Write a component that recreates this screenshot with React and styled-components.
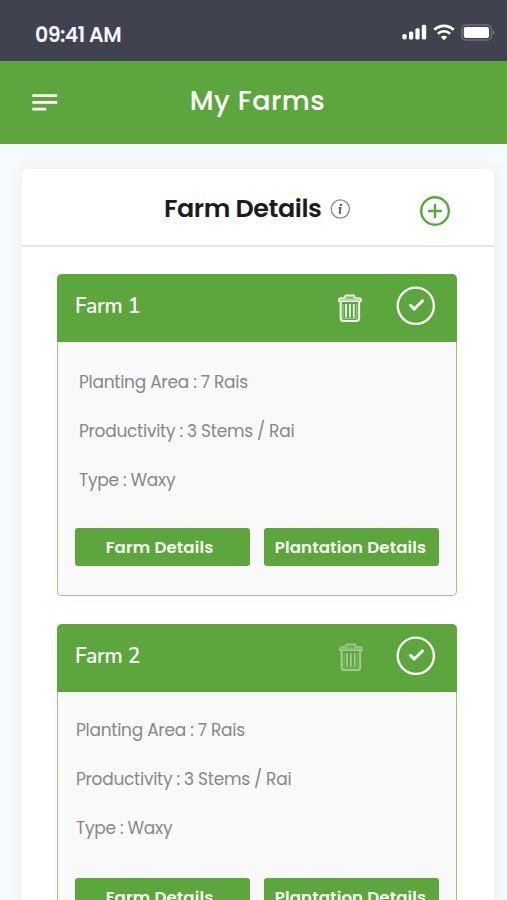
import React from "react";
import styled, { createGlobalStyle } from "styled-components";

const farms = [
  {
    id: 1,
    name: "Farm 1",
    area: "7 Rais",
    productivity: "3 Stems / Rai",
    type: "Waxy",
    canDelete: true,
  },
  {
    id: 2,
    name: "Farm 2",
    area: "7 Rais",
    productivity: "3 Stems / Rai",
    type: "Waxy",
    canDelete: false,
  },
];

const SignalIcon = () => (
  <svg width="25" height="16" viewBox="0 0 25 16" fill="#fff">
    <rect x="0.3" y="10" width="4.4" height="5.6" rx="1.8" />
    <rect x="7" y="7.4" width="4.2" height="8.2" rx="1.6" />
    <rect x="13.4" y="4.2" width="4.2" height="11.4" rx="1.6" />
    <rect x="19.8" y="0.8" width="4.4" height="14.8" rx="1.6" />
  </svg>
);

const WifiIcon = () => (
  <svg width="22" height="17" viewBox="0 0 22 17" fill="none" stroke="#fff">
    <path d="M1.3 5.8C6.8 0.5 15.2 0.5 20.7 5.8" strokeWidth="2.8" />
    <path d="M4.9 9.7C8.4 6.5 13.6 6.5 17.1 9.7" strokeWidth="2.6" />
    <path
      d="M11 16.2L7.8 13C9.6 11.3 12.4 11.3 14.2 13Z"
      fill="#fff"
      stroke="none"
    />
  </svg>
);

const BatteryIcon = () => (
  <svg width="34" height="17" viewBox="0 0 34 17">
    <rect
      x="0.8"
      y="0.9"
      width="29.6"
      height="15.2"
      rx="4.4"
      fill="none"
      stroke="#6c707b"
      strokeWidth="1.5"
    />
    <rect x="2.8" y="3" width="25.2" height="11" rx="2" fill="#fff" />
    <path d="M32 6C34.2 6.8 34.2 10.2 32 11Z" fill="#6c707b" />
  </svg>
);

const MenuIcon = () => (
  <svg width="26" height="18" viewBox="0 0 26 18" fill="#fff">
    <rect x="0.3" y="0.3" width="25" height="2.6" rx="0.6" />
    <rect x="0.3" y="7.1" width="25" height="2.6" rx="0.6" />
    <rect x="0.3" y="13.8" width="14" height="2.6" rx="0.6" />
  </svg>
);

const InfoIcon = () => (
  <svg width="20" height="20" viewBox="0 0 20 20">
    <circle
      cx="10.3"
      cy="10"
      r="9.1"
      fill="none"
      stroke="#88898d"
      strokeWidth="1.3"
    />
    <circle cx="10.9" cy="5.9" r="1.2" fill="#55565a" />
    <path
      d="M8.6 8.9H10.5L9.6 13.8Q9.6 14.5 11 13.8"
      fill="none"
      stroke="#55565a"
      strokeWidth="1.7"
    />
  </svg>
);

const PlusIcon = () => (
  <svg
    width="32"
    height="32"
    viewBox="0 0 32 32"
    fill="none"
    stroke="#5ba63c"
    strokeWidth="2.4"
    strokeLinecap="round"
  >
    <circle cx="16" cy="16" r="13.8" />
    <path d="M16 10V22M10 16H22" />
  </svg>
);

const TrashIcon = () => (
  <svg width="28" height="30" viewBox="0 0 28 30" fill="none" stroke="#fff">
    <path
      d="M2.6 8.3V7Q2.6 4.8 5 4.8H8.4L9.4 2.2H18.2L19.2 4.8H22.8Q25.2 4.8 25.2 7V8.3Z"
      fill="#fff"
      fillOpacity="0.6"
      strokeWidth="1.3"
    />
    <path d="M10.5 4.8H17.1" stroke="#5ba63c" strokeWidth="1" />
    <path
      d="M4.7 8.6V25.3Q4.7 28 7.4 28H20.4Q23.1 28 23.1 25.3V8.6"
      strokeWidth="2.1"
    />
    <path d="M7.2 11V25.5H20.6V11" strokeOpacity="0.4" strokeWidth="1.2" />
    <path d="M10 11V24.6M13.9 11V24.6M17.8 11V24.6" strokeWidth="1.8" />
  </svg>
);

const CheckIcon = () => (
  <svg
    width="40"
    height="40"
    viewBox="0 0 40 40"
    fill="none"
    stroke="#fff"
    strokeLinecap="round"
    strokeLinejoin="round"
  >
    <circle cx="19.8" cy="19.8" r="18.1" strokeWidth="2.3" />
    <path d="M14.4 19.3L18.3 23.1L26.4 14.9" strokeWidth="2.9" />
  </svg>
);

const FarmCard = ({ farm }) => (
  <Farm>
    <FarmHeader>
      <FarmName>{farm.name}</FarmName>
      <TrashButton $faded={!farm.canDelete}>
        <TrashIcon />
      </TrashButton>
      <IconButton>
        <CheckIcon />
      </IconButton>
    </FarmHeader>
    <FarmBody>
      <Info $shifted={!farm.canDelete}>
        <Line>Planting Area : {farm.area}</Line>
        <Line>Productivity : {farm.productivity}</Line>
        <Line>Type : {farm.type}</Line>
      </Info>
      <Actions>
        <ActionButton $nudge="6px">Farm Details</ActionButton>
        <ActionButton $nudge="2px">Plantation Details</ActionButton>
      </Actions>
    </FarmBody>
  </Farm>
);

const App = () => {
  return (
    <Screen>
      <GlobalStyle />
      <StatusBar>
        <Time>09:41 AM</Time>
        <StatusIcons>
          <SignalIcon />
          <WifiIcon />
          <BatteryIcon />
        </StatusIcons>
      </StatusBar>
      <NavBar>
        <IconButton>
          <MenuIcon />
        </IconButton>
        <NavTitle>My Farms</NavTitle>
      </NavBar>
      <Panel>
        <PanelHeader>
          <PanelTitle>Farm Details</PanelTitle>
          <InfoIcon />
          <AddButton>
            <PlusIcon />
          </AddButton>
        </PanelHeader>
        <FarmList>
          {farms.map((farm) => (
            <FarmCard key={farm.id} farm={farm} />
          ))}
        </FarmList>
      </Panel>
    </Screen>
  );
};

export default App;

const GlobalStyle = createGlobalStyle`
  * {
    box-sizing: border-box;
  }

  body {
    margin: 0;
    overflow: hidden;
  }

  button {
    font-family: inherit;
    cursor: pointer;
  }

  svg {
    display: block;
    flex-shrink: 0;
  }
`;

const Screen = styled.div`
  display: flex;
  flex-direction: column;
  height: 100vh;
  overflow: hidden;
  background: #f7fafc;
  font-family: "Poppins", "Inter", sans-serif;
`;

const StatusBar = styled.div`
  display: flex;
  align-items: center;
  justify-content: space-between;
  flex-shrink: 0;
  height: 61px;
  padding: 8px 12px 0 35px;
  background: #40434f;
`;

const Time = styled.span`
  color: #f1f3fa;
  font-size: 20.5px;
  font-weight: 600;
  letter-spacing: -0.55px;
  white-space: nowrap;
`;

const StatusIcons = styled.div`
  display: flex;
  align-items: center;
  gap: 6px;
  padding-bottom: 5px;
`;

const NavBar = styled.header`
  display: grid;
  grid-template-columns: 60px 1fr 60px;
  align-items: center;
  flex-shrink: 0;
  height: 83px;
  padding: 0 24px 0 32px;
  background: #5ca63d;
`;

const IconButton = styled.button`
  display: flex;
  padding: 0;
  border: none;
  background: none;
`;

const NavTitle = styled.h1`
  margin: 0 0 3px;
  color: #fff;
  font-size: 27px;
  font-weight: 500;
  line-height: 36px;
  letter-spacing: 0.5px;
  text-align: center;
`;

const Panel = styled.main`
  flex: 1 0 auto;
  margin: 25px 13px 0 22px;
  border-radius: 5px 5px 0 0;
  background: #fff;
  box-shadow: 0 0 18px rgba(60, 80, 110, 0.07);
`;

const PanelHeader = styled.div`
  display: flex;
  align-items: center;
  height: 78px;
  padding: 3px 43px 0 142px;
  border-bottom: 2px solid #e6e7ea;
`;

const PanelTitle = styled.h2`
  width: 166px;
  margin: 0;
  color: #1b1c20;
  font-size: 25.4px;
  font-weight: 600;
  letter-spacing: -0.42px;
  white-space: nowrap;
`;

const AddButton = styled(IconButton)`
  margin: 5px 0 0 auto;
`;

const FarmList = styled.div`
  display: flex;
  flex-direction: column;
  gap: 28px;
  padding: 27px 37px 0 35px;
`;

const Farm = styled.section`
  height: 322px;
  border: 1px solid #8fc97c;
  border-top: none;
  border-radius: 5px;
  background: #f9f9f9;
`;

const FarmHeader = styled.div`
  display: flex;
  align-items: center;
  height: 68px;
  margin: 0 -1px;
  padding: 0 21px 5px 18px;
  border-radius: 5px 5px 0 0;
  background: #5ca63d;
`;

const FarmName = styled.h3`
  flex: 1;
  margin: 1px 0 0;
  color: #fff;
  font-family: "Nunito", "Lato", sans-serif;
  font-size: 21px;
  font-weight: 600;
  line-height: 28px;
  letter-spacing: -0.25px;
`;

const TrashButton = styled(IconButton)`
  margin: ${({ $faded }) => ($faded ? "3px 31px 0 0" : "5px 32px 0 0")};
  opacity: ${({ $faded }) => ($faded ? 0.42 : 0.9)};
`;

const FarmBody = styled.div`
  display: flex;
  flex-direction: column;
  height: 254px;
  padding: 15px 17px 30px;
`;

const Info = styled.div`
  display: flex;
  flex-direction: column;
  margin: ${({ $shifted }) => ($shifted ? "-1px 0 0 1px" : "1px 0 0 4px")};
`;

const Line = styled.p`
  margin: 0;
  color: #878787;
  font-size: 17px;
  line-height: 49px;
  letter-spacing: -0.28px;
`;

const Actions = styled.div`
  display: grid;
  grid-template-columns: 1fr 1fr;
  gap: 14px;
  margin-top: auto;
`;

const ActionButton = styled.button`
  height: 38px;
  padding: 0 ${({ $nudge }) => $nudge} 0 0;
  border: none;
  border-radius: 3px;
  background: #5ca63d;
  color: #fafff5;
  font-size: 16.6px;
  font-weight: 600;
  letter-spacing: 0.12px;
  white-space: nowrap;
`;
